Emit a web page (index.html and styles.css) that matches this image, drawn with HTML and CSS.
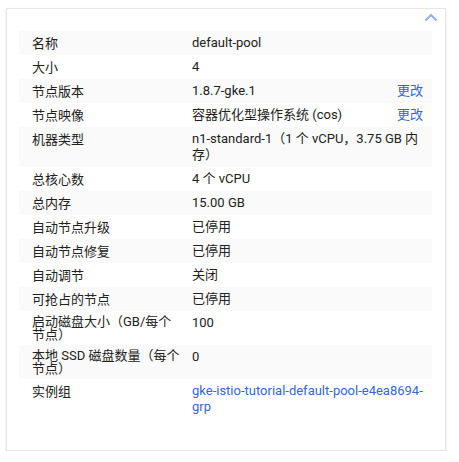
FILE: index.html
```html
<!DOCTYPE html>
<html lang="zh-CN">
<head>
<meta charset="utf-8">
<link rel="stylesheet" href="styles.css">
</head>
<body>
<div class="card">
  <div class="card-head">
    <svg class="chev" width="14" height="9" viewBox="0 0 14 9"><path d="M1.5 7.5 L7 2 L12.5 7.5" fill="none" stroke="#8fb1f2" stroke-width="2"/></svg>
  </div>
  <div class="rows">
    <div class="row alt"><div class="label">名称</div><div class="value">default-pool</div></div>
    <div class="row"><div class="label">大小</div><div class="value">4</div></div>
    <div class="row alt"><div class="label">节点版本</div><div class="value">1.8.7-gke.1</div><a class="action">更改</a></div>
    <div class="row"><div class="label">节点映像</div><div class="value">容器优化型操作系统 (cos)</div><a class="action">更改</a></div>
    <div class="row alt"><div class="label">机器类型</div><div class="value">n1-standard-1（1 个 vCPU，3.75 GB 内存）</div></div>
    <div class="row"><div class="label">总核心数</div><div class="value">4 个 vCPU</div></div>
    <div class="row alt"><div class="label">总内存</div><div class="value">15.00 GB</div></div>
    <div class="row"><div class="label">自动节点升级</div><div class="value">已停用</div></div>
    <div class="row alt"><div class="label">自动节点修复</div><div class="value">已停用</div></div>
    <div class="row"><div class="label">自动调节</div><div class="value">关闭</div></div>
    <div class="row alt"><div class="label">可抢占的节点</div><div class="value">已停用</div></div>
    <div class="row"><div class="label">启动磁盘大小（GB/每个节点）</div><div class="value">100</div></div>
    <div class="row alt"><div class="label">本地 SSD 磁盘数量（每个节点）</div><div class="value">0</div></div>
    <div class="row"><div class="label">实例组</div><div class="value"><a class="link">gke-istio-tutorial-default-pool-e4ea8694-<wbr>grp</a></div></div>
  </div>
</div>
</body>
</html>
```
FILE: styles.css
```css
html, body {
  margin: 0;
  padding: 0;
  background: #ffffff;
}
body {
  font-family: Roboto, "Noto Sans CJK SC", sans-serif;
  font-size: 13px;
  color: #212121;
}
.card {
  box-sizing: border-box;
  width: 440px;
  height: 443px;
  margin: 8px 0 0 6px;
  border: 1px solid #e6e6e6;
  box-shadow: 0 1px 2px rgba(0, 0, 0, 0.12);
  background: #fff;
  padding: 0 13px 0 12px;
}
.card-head {
  height: 22px;
  display: flex;
  justify-content: flex-end;
  align-items: flex-start;
}
.chev {
  margin-top: 4px;
  margin-right: -6px;
}
.rows {
  display: flex;
  flex-direction: column;
}
.row {
  display: flex;
  align-items: flex-start;
  padding: 4px 0;
}
.row.alt {
  background: #fafafa;
}
.label {
  box-sizing: border-box;
  width: 163px;
  flex: none;
  padding: 0 0 0 13px;
  line-height: 13px;
  min-height: 16px;
  display: flex;
  flex-direction: column;
  justify-content: center;
}
.value {
  flex: 1;
  padding: 0 4px 0 10px;
  line-height: 16px;
}
.action {
  flex: none;
  padding-right: 9px;
  line-height: 16px;
  color: #3367d6;
}
.link {
  color: #3367d6;
}
```
